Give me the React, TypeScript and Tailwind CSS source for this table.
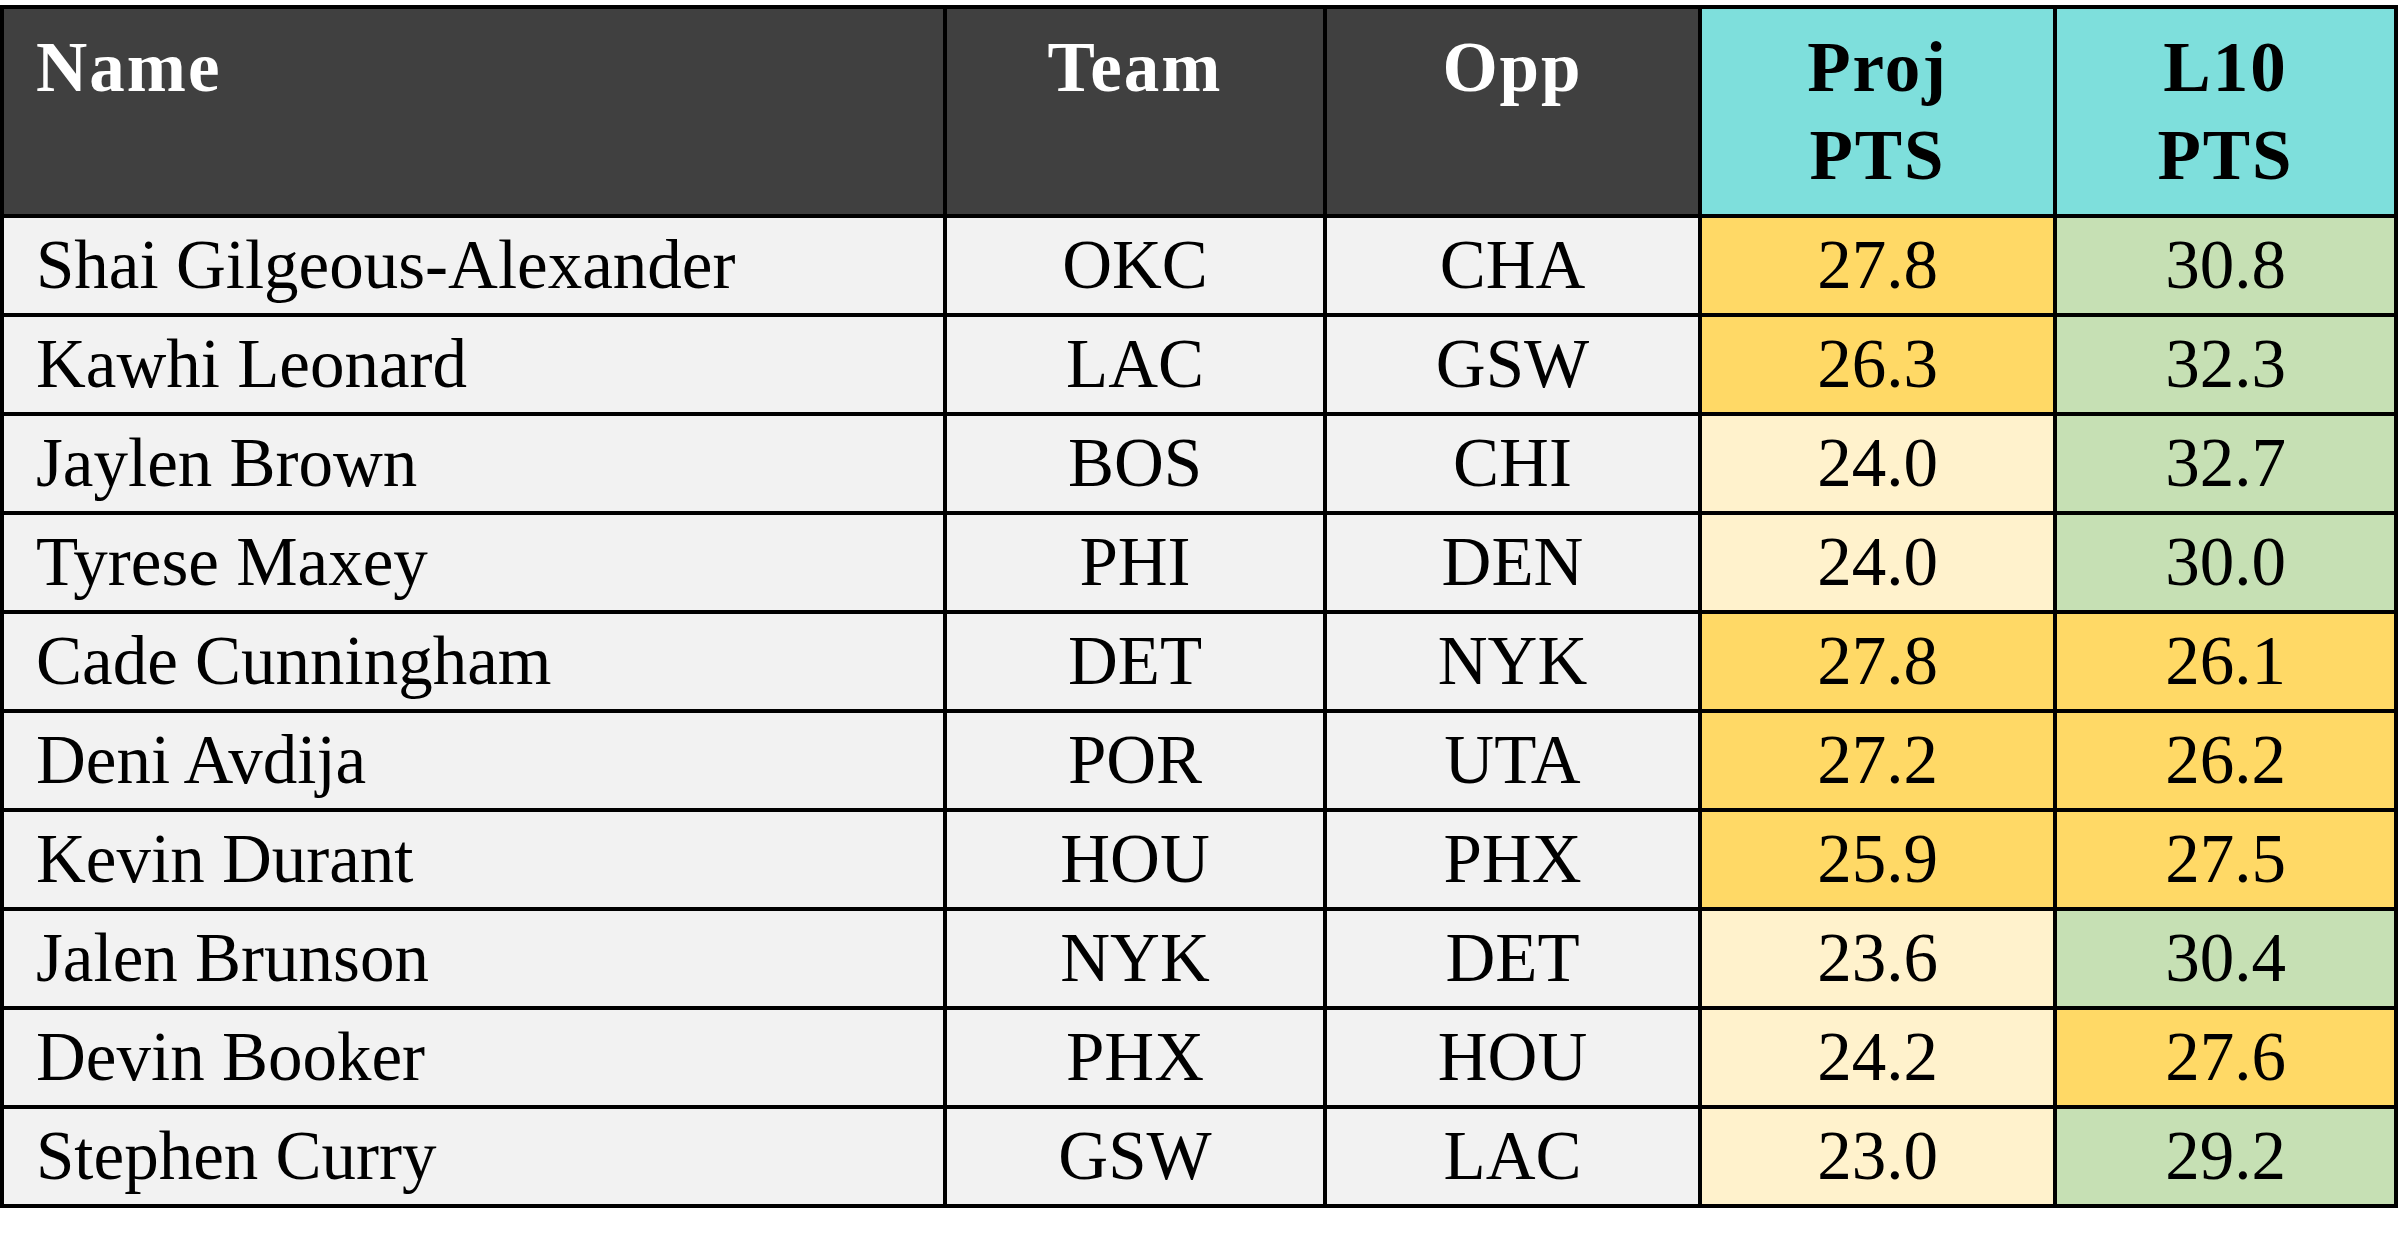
import React from 'react';

type Shade = 'gold' | 'cream' | 'green';

type Row = {
    name: string;
    team: string;
    opp: string;
    proj: string;
    projShade: Shade;
    l10: string;
    l10Shade: Shade;
};

const rows: Row[] = [
    { name: 'Shai Gilgeous-Alexander', team: 'OKC', opp: 'CHA', proj: '27.8', projShade: 'gold', l10: '30.8', l10Shade: 'green' },
    { name: 'Kawhi Leonard', team: 'LAC', opp: 'GSW', proj: '26.3', projShade: 'gold', l10: '32.3', l10Shade: 'green' },
    { name: 'Jaylen Brown', team: 'BOS', opp: 'CHI', proj: '24.0', projShade: 'cream', l10: '32.7', l10Shade: 'green' },
    { name: 'Tyrese Maxey', team: 'PHI', opp: 'DEN', proj: '24.0', projShade: 'cream', l10: '30.0', l10Shade: 'green' },
    { name: 'Cade Cunningham', team: 'DET', opp: 'NYK', proj: '27.8', projShade: 'gold', l10: '26.1', l10Shade: 'gold' },
    { name: 'Deni Avdija', team: 'POR', opp: 'UTA', proj: '27.2', projShade: 'gold', l10: '26.2', l10Shade: 'gold' },
    { name: 'Kevin Durant', team: 'HOU', opp: 'PHX', proj: '25.9', projShade: 'gold', l10: '27.5', l10Shade: 'gold' },
    { name: 'Jalen Brunson', team: 'NYK', opp: 'DET', proj: '23.6', projShade: 'cream', l10: '30.4', l10Shade: 'green' },
    { name: 'Devin Booker', team: 'PHX', opp: 'HOU', proj: '24.2', projShade: 'cream', l10: '27.6', l10Shade: 'gold' },
    { name: 'Stephen Curry', team: 'GSW', opp: 'LAC', proj: '23.0', projShade: 'cream', l10: '29.2', l10Shade: 'green' },
];

// conditional-format fills, spelled out so tailwind picks them up
const shadeBg: Record<Shade, string> = {
    gold: 'bg-[#ffd966]',
    cream: 'bg-[#fff2cc]',
    green: 'bg-[#c6e0b4]',
};

const font = "font-['Liberation_Serif','Times_New_Roman',serif]";

function HeadCell({ children, teal, left }: { children: React.ReactNode; teal?: boolean; left?: boolean }) {
    return (
        <div
            className={`${teal ? 'bg-[#7edfdc] text-black' : 'bg-[#404040] text-white'} ${left ? 'pl-[32px] text-left' : 'text-center'} pt-[14px] text-[71px] leading-[88px] font-bold tracking-[2px]`}
        >
            {children}
        </div>
    );
}

function Cell({ children, bg, left }: { children: React.ReactNode; bg: string; left?: boolean }) {
    return (
        <div className={`${bg} flex items-center ${left ? 'justify-start pl-[32px]' : 'justify-center'} text-[69px] leading-none text-black whitespace-nowrap`}>
            {children}
        </div>
    );
}

export default function App() {
    return (
        <div className={`min-h-screen bg-white pt-[5px] ${font}`}>
            <div className="inline-grid grid-cols-[939px_376px_371px_351px_337px] grid-rows-[205px_repeat(10,95px)] gap-[4px] bg-black p-[4px]">
                {/* Header */}
                <HeadCell left>Name</HeadCell>
                <HeadCell>Team</HeadCell>
                <HeadCell>Opp</HeadCell>
                <HeadCell teal>
                    Proj
                    <br />
                    PTS
                </HeadCell>
                <HeadCell teal>
                    L10
                    <br />
                    PTS
                </HeadCell>

                {/* Body */}
                {rows.map((r) => (
                    <React.Fragment key={r.name}>
                        <Cell bg="bg-[#f2f2f2]" left>
                            {r.name}
                        </Cell>
                        <Cell bg="bg-[#f2f2f2]">{r.team}</Cell>
                        <Cell bg="bg-[#f2f2f2]">{r.opp}</Cell>
                        <Cell bg={shadeBg[r.projShade]}>{r.proj}</Cell>
                        <Cell bg={shadeBg[r.l10Shade]}>{r.l10}</Cell>
                    </React.Fragment>
                ))}
            </div>
        </div>
    );
}
